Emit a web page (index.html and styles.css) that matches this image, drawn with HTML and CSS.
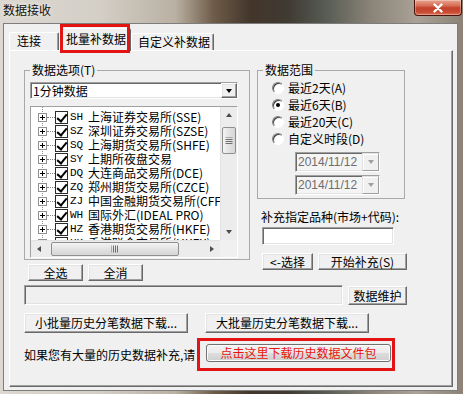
FILE: index.html
```html
<!DOCTYPE html>
<html lang="zh-CN">
<head>
    <meta charset="UTF-8">
    <title>数据接收</title>
    <link rel="stylesheet" href="styles.css">
</head>
<body>
<div class="window">
    <div class="titlebar">
        <span class="title">数据接收</span>
        <div class="close-btn">
            <svg width="14" height="10" viewBox="0 0 14 10"><path d="M3.5 1.5 L10.5 8.5 M10.5 1.5 L3.5 8.5" stroke="#fff" stroke-width="2.4" stroke-linecap="round"/></svg>
        </div>
    </div>

    <div class="client">
        <div class="tabs">
            <div class="tab tab-conn">连接</div>
            <div class="tab tab-batch">批量补数据</div>
            <div class="tab tab-custom">自定义补数据</div>
        </div>

        <div class="pane">
            <div class="top">
                <div class="col-left">
                    <fieldset class="group group-options">
                        <legend>数据选项(T)</legend>
                        <div class="combo">
                            <span class="combo-text">1分钟数据</span>
                            <span class="drop-btn"><span class="arrow-down"></span></span>
                        </div>
                        <div class="listbox">
                            <div class="list-rows">
                                <div class="row"><span class="exp"></span><span class="twig"></span><span class="check"></span><span class="code">SH</span><span class="name">上海证券交易所(SSE)</span></div>
                                <div class="row"><span class="exp"></span><span class="twig"></span><span class="check"></span><span class="code">SZ</span><span class="name">深圳证券交易所(SZSE)</span></div>
                                <div class="row"><span class="exp"></span><span class="twig"></span><span class="check"></span><span class="code">SQ</span><span class="name">上海期货交易所(SHFE)</span></div>
                                <div class="row"><span class="exp"></span><span class="twig"></span><span class="check"></span><span class="code">SY</span><span class="name">上期所夜盘交易</span></div>
                                <div class="row"><span class="exp"></span><span class="twig"></span><span class="check"></span><span class="code">DQ</span><span class="name">大连商品交易所(DCE)</span></div>
                                <div class="row"><span class="exp"></span><span class="twig"></span><span class="check"></span><span class="code">ZQ</span><span class="name">郑州期货交易所(CZCE)</span></div>
                                <div class="row"><span class="exp"></span><span class="twig"></span><span class="check"></span><span class="code">ZJ</span><span class="name">中国金融期货交易所(CFFEX)</span></div>
                                <div class="row"><span class="exp"></span><span class="twig"></span><span class="check"></span><span class="code">WH</span><span class="name">国际外汇(IDEAL PRO)</span></div>
                                <div class="row"><span class="exp"></span><span class="twig"></span><span class="check"></span><span class="code">HZ</span><span class="name">香港期货交易所(HKFE)</span></div>
                                <div class="row"><span class="exp"></span><span class="twig"></span><span class="check"></span><span class="code">HK</span><span class="name">香港联合交易所(HKEX)</span></div>
                            </div>
                            <div class="vscroll">
                                <span class="sb-btn"><span class="arrow-up"></span></span>
                                <span class="sb-track"><span class="thumb-v"></span></span>
                                <span class="sb-btn"><span class="arrow-dn"></span></span>
                            </div>
                            <div class="hscroll">
                                <span class="sb-btn"><span class="arrow-left"></span></span>
                                <span class="sb-track"><span class="thumb-h"></span></span>
                                <span class="sb-btn"><span class="arrow-right"></span></span>
                            </div>
                            <div class="sb-corner"></div>
                        </div>
                    </fieldset>
                    <div class="sel-row">
                        <button class="btn btn-sel">全选</button>
                        <button class="btn btn-sel">全消</button>
                    </div>
                </div>

                <div class="col-right">
                    <fieldset class="group group-range">
                        <legend>数据范围</legend>
                        <div class="radio-row"><span class="radio"></span>最近2天(A)</div>
                        <div class="radio-row"><span class="radio on"></span>最近6天(B)</div>
                        <div class="radio-row"><span class="radio"></span>最近20天(C)</div>
                        <div class="radio-row"><span class="radio"></span>自定义时段(D)</div>
                        <div class="date-combo first">
                            <span class="date-text">2014/11/12</span>
                            <span class="date-btn"><span class="arrow-down gray"></span></span>
                        </div>
                        <div class="date-combo">
                            <span class="date-text">2014/11/12</span>
                            <span class="date-btn"><span class="arrow-down gray"></span></span>
                        </div>
                    </fieldset>
                    <div class="code-label">补充指定品种(市场+代码):</div>
                    <div class="textbox"></div>
                    <div class="pick-row">
                        <button class="btn btn-pick">&lt;-选择</button>
                        <button class="btn btn-start">开始补充(S)</button>
                    </div>
                </div>
            </div>

            <div class="maint-row">
                <div class="status-field"></div>
                <button class="btn btn-maint">数据维护</button>
            </div>

            <div class="dl-row">
                <button class="btn btn-dl">小批量历史分笔数据下载...</button>
                <button class="btn btn-dl">大批量历史分笔数据下载...</button>
            </div>

            <div class="pkg-row">
                <span class="pkg-note">如果您有大量的历史数据补充,请</span>
                <span class="highlight"><button class="aero-btn">点击这里下载历史数据文件包</button></span>
            </div>
        </div>
    </div>
</div>
</body>
</html>
```

FILE: styles.css
```css
* {
    box-sizing: border-box;
}
body {
    margin: 0;
    width: 463px;
    height: 394px;
    overflow: hidden;
    font-family: "Noto Sans CJK SC", "Liberation Sans", sans-serif;
    font-size: 12px;
    color: #000;
    background: linear-gradient(90deg, #dcd8d1 0%, #d3cec6 22%, #b9b0a2 38%, #6f5d49 46%, #43362b 54%, #3f3a32 62%, #565a52 70%, #8a8377 80%, #aaa296 90%, #8c8276 100%);
}
.window {
    height: 394px;
    display: flex;
    flex-direction: column;
}

/* title bar */
.titlebar {
    height: 23px;
    display: flex;
    justify-content: space-between;
    align-items: flex-start;
}
.title {
    padding: 3px 0 0 3px;
    line-height: 14px;
    color: #111;
    text-shadow: 0 0 5px rgba(255, 255, 255, 0.9);
}
.close-btn {
    width: 48px;
    height: 16px;
    margin-right: 1px;
    display: flex;
    align-items: center;
    justify-content: center;
    border: 1px solid #4a1208;
    border-top: 0;
    border-radius: 0 0 4px 4px;
    background: linear-gradient(#e9a490, #d56a52 40%, #c2412a 52%, #c84b32 80%, #d8735a);
    box-shadow: inset 0 0 0 1px rgba(255, 255, 255, 0.3);
}

/* client area + tabs */
.client {
    flex: 1;
    margin: 0 5px 3px 3px;
    padding: 4px 4px 3px 5px;
    background: #f0f0f0;
    border: 1px solid #7d7d7d;
    display: flex;
    flex-direction: column;
}
.tabs {
    height: 22px;
    display: flex;
    align-items: flex-end;
}
.tab {
    height: 18px;
    line-height: 16px;
    padding-left: 6px;
    background: #f0f0f0;
    border: 1px solid;
    border-color: #fff #696969 transparent #fff;
    border-bottom: 0;
    border-radius: 2px 2px 0 0;
    box-shadow: inset -1px 0 0 #a0a0a0;
    white-space: nowrap;
}
.tab-conn {
    width: 50px;
    padding-left: 7px;
}
.tab-batch {
    width: 72px;
    height: 23px;
    line-height: 20px;
    margin-bottom: -1px;
    position: relative;
    z-index: 1;
}
.tab-batch::after {
    content: "";
    position: absolute;
    left: 0;
    right: 0;
    top: -5px;
    bottom: -2px;
    border: 3px solid #e31414;
}
.tab-custom {
    width: 83px;
    height: 17px;
}
.pane {
    height: 337px;
    padding: 12px 0 0 14px;
    border: 1px solid;
    border-color: #fff #696969 #696969 #fff;
    box-shadow: inset -1px -1px 0 #a0a0a0;
}

/* top block: two columns */
.top {
    display: grid;
    grid-template-columns: 226px 150px;
    column-gap: 7px;
    align-items: start;
}
.group {
    margin: 0;
    min-width: 0;
    border: 1px solid #a9a9a9;
}
.group legend {
    padding: 0 2px;
    line-height: 14px;
}
.group-options {
    width: 226px;
    padding: 5px 5px 1px 5px;
}
.group-range {
    width: 148px;
    padding: 2px 5px 3px 5px;
}

/* sunken fields */
.combo, .listbox, .date-combo, .textbox, .status-field {
    border: 1px solid;
    border-color: #a0a0a0 #fff #fff #a0a0a0;
    box-shadow: inset 1px 1px 0 #696969, inset -1px -1px 0 #e3e3e3;
}

/* raised buttons */
.btn, .drop-btn, .date-btn {
    padding: 0;
    font: inherit;
    color: #000;
    background: #f0f0f0;
    border: 1px solid;
    border-color: #fff #696969 #696969 #fff;
    box-shadow: inset -1px -1px 0 #a0a0a0, inset 1px 1px 0 #e3e3e3;
    white-space: nowrap;
}

.combo {
    width: 208px;
    height: 17px;
    display: flex;
    background: #fff;
}
.combo-text {
    flex: 1;
    padding-left: 2px;
    line-height: 15px;
}
.drop-btn {
    width: 16px;
    height: 15px;
    display: flex;
    align-items: center;
    justify-content: center;
}
.arrow-down {
    width: 0;
    height: 0;
    border-style: solid;
    border-width: 4px 3.5px 0;
    border-color: #000 transparent transparent;
}
.arrow-down.gray {
    border-top-color: #a0a0a0;
}

/* tree list */
.listbox {
    width: 208px;
    height: 152px;
    margin-top: 7px;
    display: grid;
    grid-template-columns: 1fr 17px;
    grid-template-rows: 1fr 17px;
    background: #fff;
}
.list-rows {
    overflow: hidden;
    padding-top: 3px;
    background: linear-gradient(#8a8a8a 50%, transparent 50%) 11px 0 / 1px 2px repeat-y, #fff;
}
.row {
    height: 14px;
    display: flex;
    align-items: center;
    padding-left: 7px;
    white-space: nowrap;
}
.exp {
    flex: none;
    width: 9px;
    height: 9px;
    position: relative;
    background: #fff;
    border: 1px solid #919191;
}
.exp::before, .exp::after {
    content: "";
    position: absolute;
    background: #000;
}
.exp::before {
    left: 1px;
    top: 3px;
    width: 5px;
    height: 1px;
}
.exp::after {
    left: 3px;
    top: 1px;
    width: 1px;
    height: 5px;
}
.twig {
    flex: none;
    width: 8px;
    border-top: 1px dotted #808080;
}
.check {
    flex: none;
    width: 13px;
    height: 13px;
    position: relative;
    background: #fff;
    border: 1px solid #2b2b2b;
}
.check::after {
    content: "";
    position: absolute;
    left: 3px;
    top: 0;
    width: 4px;
    height: 8px;
    border-right: 2px solid #000;
    border-bottom: 2px solid #000;
    transform: rotate(40deg);
}
.code {
    flex: none;
    width: 18px;
    margin-left: 2px;
    line-height: 12px;
    font-family: "Liberation Mono", monospace;
    font-size: 11px;
}
.name {
    line-height: 12px;
}

/* scrollbars */
.vscroll, .hscroll {
    display: flex;
    background: #ececec;
}
.vscroll {
    flex-direction: column;
    border-left: 1px solid #e2e2e2;
}
.hscroll {
    border-top: 1px solid #e2e2e2;
}
.sb-btn {
    flex: none;
    width: 16px;
    height: 16px;
    display: flex;
    align-items: center;
    justify-content: center;
}
.sb-track {
    flex: 1;
    display: flex;
}
.vscroll .sb-track {
    flex-direction: column;
}
.sb-corner {
    background: #f0f0f0;
}
.arrow-up, .arrow-dn, .arrow-left, .arrow-right {
    width: 0;
    height: 0;
    border-style: solid;
    border-color: transparent;
}
.arrow-up {
    border-width: 0 3.5px 4px;
    border-bottom-color: #4d4d4d;
}
.arrow-dn {
    border-width: 4px 3.5px 0;
    border-top-color: #4d4d4d;
}
.arrow-left {
    border-width: 3.5px 4px 3.5px 0;
    border-right-color: #4d4d4d;
}
.arrow-right {
    border-width: 3.5px 0 3.5px 4px;
    border-left-color: #4d4d4d;
}
.thumb-v, .thumb-h {
    position: relative;
    border: 1px solid #8e8f8f;
    border-radius: 2px;
}
.thumb-v {
    height: 27px;
    margin: 4px 1px 0;
    background: linear-gradient(90deg, #f4f4f4, #e3e3e3 50%, #d6d6d6);
}
.thumb-h {
    width: 128px;
    margin: 1px 0 1px 4px;
    background: linear-gradient(#f4f4f4, #e3e3e3 50%, #d6d6d6);
}
.thumb-v::after, .thumb-h::after {
    content: "";
    position: absolute;
    left: 50%;
    top: 50%;
    transform: translate(-50%, -50%);
}
.thumb-v::after {
    width: 7px;
    height: 7px;
    background: repeating-linear-gradient(#707070 0 1px, transparent 1px 2px);
}
.thumb-h::after {
    width: 7px;
    height: 7px;
    background: repeating-linear-gradient(90deg, #707070 0 1px, transparent 1px 2px);
}

.sel-row {
    display: flex;
    gap: 5px;
    margin: 4px 0 0 4px;
}
.btn-sel {
    width: 55px;
    height: 17px;
    line-height: 15px;
}

/* right column */
.radio-row {
    height: 17px;
    display: flex;
    align-items: center;
    padding-left: 9px;
    white-space: nowrap;
}
.radio {
    flex: none;
    width: 12px;
    height: 12px;
    margin-right: 4px;
    position: relative;
    border-radius: 50%;
    background: #fff;
    border: 1px solid;
    border-color: #808080 #fff #fff #808080;
    box-shadow: inset 1px 1px 0 #404040;
}
.radio.on::after {
    content: "";
    position: absolute;
    left: 3px;
    top: 3px;
    width: 4px;
    height: 4px;
    border-radius: 50%;
    background: #000;
}
.date-combo {
    width: 85px;
    height: 20px;
    margin: 3px 0 0 32px;
    display: flex;
    background: #f4f4f4;
}
.date-combo.first {
    margin-top: 5px;
}
.date-text {
    flex: 1;
    padding-left: 2px;
    line-height: 18px;
    font-family: "Liberation Sans", sans-serif;
    color: #6d6d6d;
}
.date-btn {
    width: 17px;
    height: 18px;
    display: flex;
    align-items: center;
    justify-content: center;
    border-color: #e3e3e3 #a0a0a0 #a0a0a0 #e3e3e3;
    box-shadow: inset 1px 1px 0 #fff;
}
.code-label {
    margin-top: 11px;
    padding-left: 4px;
    line-height: 14px;
    white-space: nowrap;
}
.textbox {
    width: 132px;
    height: 18px;
    margin: 3px 0 0 5px;
    background: #fff;
}
.pick-row {
    display: flex;
    gap: 5px;
    margin: 8px 0 0 5px;
}
.btn-pick {
    width: 51px;
    height: 17px;
    line-height: 15px;
}
.btn-start {
    width: 89px;
    height: 17px;
    line-height: 15px;
}

/* bottom rows */
.maint-row {
    display: flex;
    align-items: flex-end;
    gap: 5px;
    margin-top: 4px;
}
.status-field {
    width: 319px;
    height: 20px;
    background: #f0f0f0;
}
.btn-maint {
    width: 59px;
    height: 19px;
    line-height: 17px;
}
.dl-row {
    display: flex;
    gap: 17px;
    margin-top: 8px;
}
.btn-dl {
    width: 164px;
    height: 20px;
    line-height: 18px;
}
.pkg-row {
    display: flex;
    align-items: center;
    margin-top: 5px;
}
.pkg-note {
    width: 173px;
    line-height: 14px;
    white-space: nowrap;
}
.highlight {
    display: flex;
    padding: 3px 1px 6px 6px;
    border: 3px solid #e31414;
}
.aero-btn {
    width: 185px;
    height: 18px;
    padding: 0;
    font: inherit;
    line-height: 16px;
    color: #e8140c;
    border: 1px solid #707070;
    border-radius: 3px;
    background: linear-gradient(#f2f2f2 0%, #ebebeb 50%, #dddddd 50%, #cfcfcf 100%);
    box-shadow: inset 0 0 0 1px #fcfcfc;
    white-space: nowrap;
}
```
